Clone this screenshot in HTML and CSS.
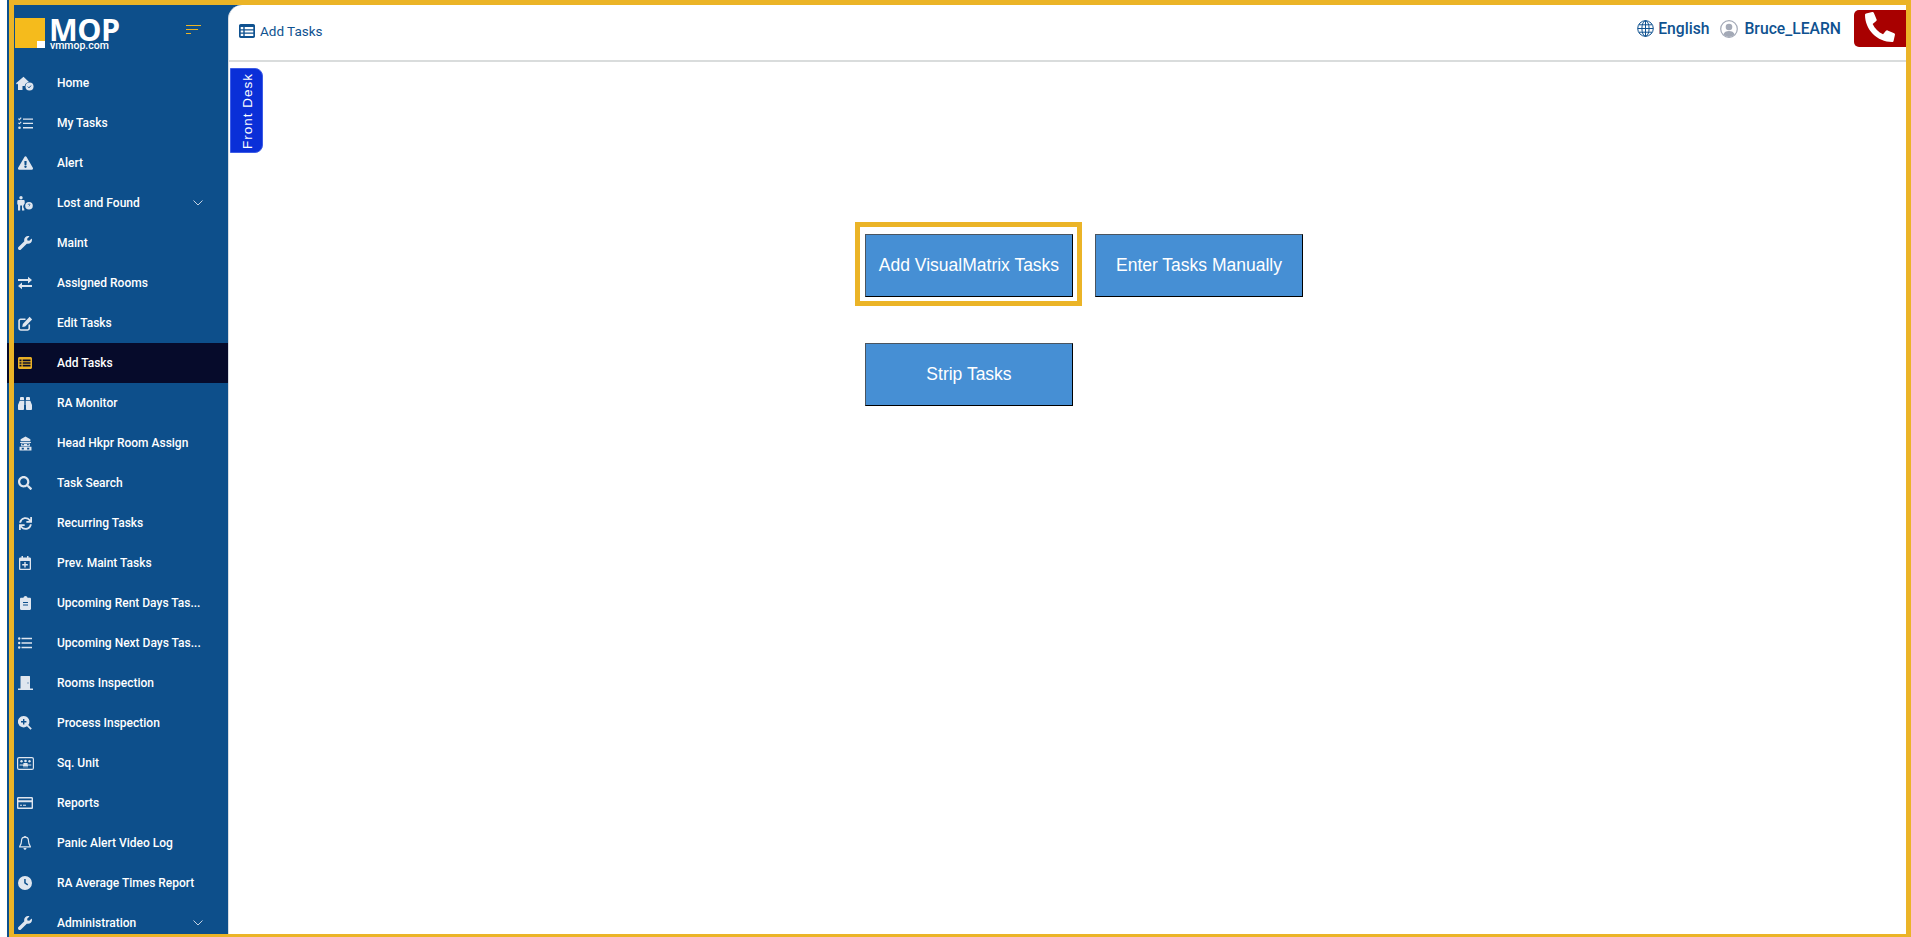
FILE: index.html
```html
<!DOCTYPE html>
<html lang="en">
<head>
<meta charset="utf-8">
<title>Add Tasks</title>
<link rel="stylesheet" href="styles.css">
</head>
<body>
<div class="frame"></div>
<div class="shell">
  <aside class="sidebar">
    <div class="brand">
      <div class="logo-mark"><span class="logo-notch"></span></div>
      <div class="logo-text"><div class="logo-mop">MOP</div><div class="logo-url">vmmop.com</div></div>
      <div class="burger"><span class="b1"></span><span class="b2"></span><span class="b3"></span></div>
    </div>
    <nav class="nav">
      <a class="item"><span class="ico"><svg width="18" height="15" viewBox="0 0 18 15"><path d="M7.500.8 0 7.200l1 1.200 1-.8V14h4.500v-4h2.200a5 5 0 0 1 4.300-3.900L7.500.8z"/><circle cx="13.500" cy="10.500" r="4"/><path d="m11.800 10.600 1.200 1.200 2-2.200" fill="none" stroke="#0d4f8b" stroke-width="1"/></svg></span><span class="label">Home</span></a>
      <a class="item"><span class="ico"><svg width="15" height="13" viewBox="0 0 15 13"><path d="M5 1.500h10v1.300H5zM5 5.800h10v1.300H5zM5 10.100h10v1.300H5z"/><path d="m.4 1.700 1 1 1.800-2" fill="none" stroke="currentColor" stroke-width="1.100"/><path d="m.4 5.800 1 1 1.800-2" fill="none" stroke="currentColor" stroke-width="1.100"/><circle cx="1.500" cy="10.800" r="1.300"/></svg></span><span class="label">My Tasks</span></a>
      <a class="item"><span class="ico"><svg width="15" height="14" viewBox="0 0 576 512"><path d="M569.517 440.013C587.975 472.007 564.806 512 527.94 512H48.054c-36.937 0-59.999-40.055-41.577-71.987L246.423 23.985c18.467-32.009 64.72-31.951 83.154 0l239.94 416.028zM288 354c-25.405 0-46 20.595-46 46s20.595 46 46 46 46-20.595 46-46-20.595-46-46-46zm-43.673-165.346l7.418 136c.347 6.364 5.609 11.346 11.982 11.346h48.546c6.373 0 11.635-4.982 11.982-11.346l7.418-136c.375-6.874-5.098-12.654-11.982-12.654h-63.383c-6.884 0-12.356 5.780-11.981 12.654z"/></svg></span><span class="label">Alert</span></a>
      <a class="item"><span class="ico"><svg width="16" height="15" viewBox="0 0 16 15"><circle cx="4" cy="1.700" r="1.700"/><path d="M1.200 4h5.600c.5 0 .9.400.9.900v2.600A4.500 4.500 0 0 0 7.300 13.300V14.500H5V9.500H3.200v5H1V8.500H.3V4.900c0-.5.400-.9.900-.9z"/><circle cx="12" cy="9.700" r="3.800"/><path d="M11.100 8.700c.2-.9 1.900-.9 1.900.1 0 .7-1 .7-1 1.500" fill="none" stroke="#0d4f8b" stroke-width=".8"/></svg></span><span class="label">Lost and Found</span><svg class="chev" width="10" height="6" viewBox="0 0 10 6"><path d="m.5.500 4.500 4.500 4.500-4.500" fill="none" stroke="currentColor"/></svg></a>
      <a class="item"><span class="ico"><svg width="14" height="14" viewBox="0 0 512 512"><path d="M507.73 109.1c-2.24-9.03-13.54-12.09-20.12-5.510l-74.360 74.360-67.880-11.310-11.310-67.880 74.360-74.360c6.620-6.620 3.430-17.900-5.660-20.160-47.380-11.740-99.550.910-136.580 37.930-39.640 39.640-50.550 97.100-34.050 147.200L18.740 402.760c-24.990 24.990-24.990 65.510 0 90.500 24.990 24.990 65.510 24.990 90.500 0l213.210-213.210c50.120 16.710 107.470 5.680 147.370-34.220 37.070-37.070 49.700-89.320 37.910-136.730z"/></svg></span><span class="label">Maint</span></a>
      <a class="item"><span class="ico"><svg width="14" height="14" viewBox="0 0 14 13"><path d="M0 2.600h10V.2l4 3.400-4 3.400V4.600H0zM14 8.400H4V6L0 9.400l4 3.400v-2.400h10z"/></svg></span><span class="label">Assigned Rooms</span></a>
      <a class="item"><span class="ico"><svg width="15" height="15" viewBox="0 0 14 14"><path d="M10.500 8v3.500c0 .8-.7 1.500-1.500 1.500H2.500C1.700 13 1 12.300 1 11.500V4.500C1 3.700 1.700 3 2.500 3H7" fill="none" stroke="currentColor" stroke-width="1.500"/><path d="M4.500 7.500 10.800.8l2.400 2.400-6.500 6.600-2.700.4z"/></svg></span><span class="label">Edit Tasks</span></a>
      <a class="item active"><span class="ico"><svg width="14" height="12" viewBox="0 0 14 12"><path fill-rule="evenodd" d="M1.500 0h11c.8 0 1.500.7 1.500 1.500v9c0 .8-.7 1.500-1.500 1.500h-11C.7 12 0 11.300 0 10.500v-9C0 .7.700 0 1.500 0zM1.500 2.500v1.700h2V2.500zm3.200 0v1.700h7.800V2.500zM1.500 5.200v1.600h2V5.200zm3.200 0v1.600h7.800V5.200zM1.500 7.800v1.700h2V7.800zm3.200 0v1.700h7.800V7.800z"/></svg></span><span class="label">Add Tasks</span></a>
      <a class="item"><span class="ico"><svg width="14" height="13" viewBox="0 0 14 13"><path d="M2 3V1.200C2 .5 2.500 0 3.200 0h1.600C5.500 0 6 .5 6 1.200V3zM8 3V1.200C8 .5 8.500 0 9.200 0h1.600c.7 0 1.200.5 1.200 1.200V3zM1.700 3.800H6V12c0 .5-.4 1-1 1H1c-.6 0-1-.5-1-1V8zM8 3.800h4.300L14 8v4c0 .5-.4 1-1 1H9c-.6 0-1-.5-1-1zM6.700 3.800h.6V8h-.6z"/></svg></span><span class="label">RA Monitor</span></a>
      <a class="item"><span class="ico"><svg width="13" height="15" viewBox="0 0 12 13"><path fill-rule="evenodd" d="M6 0 1.500 2.500v2h9v-2zM1 5h10v1H1zM2 6.500h8V9H2zM.5 9.500h11V13H.5zM3 7v1h1.500V7zM7.500 7v1H9V7zM2.500 10.500v1.500h2v-1.500zM7.500 10.500v1.500h2v-1.500z"/></svg></span><span class="label">Head Hkpr Room Assign</span></a>
      <a class="item"><span class="ico"><svg width="14" height="14" viewBox="0 0 512 512"><path d="M505 442.700L405.300 343c-4.500-4.500-10.600-7-17-7H372c27.600-35.300 44-79.700 44-128C416 93.100 322.900 0 208 0S0 93.100 0 208s93.100 208 208 208c48.300 0 92.700-16.400 128-44v16.300c0 6.400 2.500 12.500 7 17l99.700 99.700c9.400 9.400 24.600 9.400 33.900 0l28.300-28.300c9.400-9.400 9.400-24.600.1-34zM208 336c-70.700 0-128-57.200-128-128 0-70.700 57.200-128 128-128 70.700 0 128 57.200 128 128 0 70.700-57.200 128-128 128z"/></svg></span><span class="label">Task Search</span></a>
      <a class="item"><span class="ico"><svg width="13" height="13" viewBox="0 0 512 512"><path d="M440.650 12.570l4 82.770A247.160 247.160 0 0 0 255.830 8C134.730 8 33.910 94.920 12.290 209.820A12 12 0 0 0 24.090 224h49.050a12 12 0 0 0 11.670-9.260 175.910 175.910 0 0 1 317-56.940l-101.460-4.860a12 12 0 0 0-12.570 12v47.410a12 12 0 0 0 12 12H500a12 12 0 0 0 12-12V12a12 12 0 0 0-12-12h-47.370a12 12 0 0 0-11.980 12.570zM255.830 432a175.610 175.610 0 0 1-146-77.800l101.800 4.870a12 12 0 0 0 12.570-12v-47.400a12 12 0 0 0-12-12H12a12 12 0 0 0-12 12V500a12 12 0 0 0 12 12h47.350a12 12 0 0 0 12-12.600l-4.150-82.570A247.170 247.170 0 0 0 255.830 504c121.110 0 221.930-86.920 243.550-201.820a12 12 0 0 0-11.800-14.180h-49.050a12 12 0 0 0-11.670 9.260A175.860 175.860 0 0 1 255.830 432z"/></svg></span><span class="label">Recurring Tasks</span></a>
      <a class="item"><span class="ico"><svg width="12" height="14" viewBox="0 0 12 14"><path fill-rule="evenodd" d="M2.500 0h1.500v1.500h4V0h1.500v1.500h1.200c.7 0 1.300.6 1.300 1.300v9.900c0 .7-.6 1.300-1.300 1.300H1.300C.6 14 0 13.400 0 12.700V2.800c0-.7.600-1.300 1.300-1.300h1.200zM1.300 5v7.700h9.400V5zM5.300 6h1.400v2.100h2.100v1.400H6.700v2.100H5.300V9.500H3.200V8.100h2.100z"/></svg></span><span class="label">Prev. Maint Tasks</span></a>
      <a class="item"><span class="ico"><svg width="11" height="14" viewBox="0 0 11 14"><path fill-rule="evenodd" d="M1.200 1.800h2.300C3.600.8 4.500 0 5.500 0s1.900.8 2 1.800h2.300c.7 0 1.200.5 1.200 1.200v9.800c0 .7-.5 1.200-1.200 1.200H1.200C.5 14 0 13.500 0 12.800V3C0 2.300.5 1.800 1.200 1.800zM3 6v.9h5V6zM3 8.500v.9h5v-.9z"/></svg></span><span class="label">Upcoming Rent Days Tas...</span></a>
      <a class="item"><span class="ico"><svg width="14" height="12" viewBox="0 0 14 12"><circle cx="1.200" cy="1.500" r="1.200"/><circle cx="1.200" cy="6" r="1.200"/><circle cx="1.200" cy="10.500" r="1.200"/><path d="M3.500.8H14v1.400H3.500zM3.500 5.300H14v1.400H3.500zM3.500 9.800H14v1.400H3.500z"/></svg></span><span class="label">Upcoming Next Days Tas...</span></a>
      <a class="item"><span class="ico"><svg width="15" height="14" viewBox="0 0 15 14"><path fill-rule="evenodd" d="M3 0h8.500c.3 0 .5.200.5.500V12.500h3V14H0v-1.500h2.500V.5c0-.3.200-.5.500-.5zM9.500 6.500v1h1v-1z"/></svg></span><span class="label">Rooms Inspection</span></a>
      <a class="item"><span class="ico"><svg width="14" height="14" viewBox="0 0 14 14"><path fill-rule="evenodd" d="M5.700 0a5.700 5.700 0 0 1 4.600 9l3.500 3.500-1.300 1.300-3.500-3.500A5.700 5.700 0 1 1 5.700 0zM5 3v2H3v1.400h2v2h1.400v-2h2V5h-2V3z"/></svg></span><span class="label">Process Inspection</span></a>
      <a class="item"><span class="ico"><svg width="17" height="13" viewBox="0 0 17 13"><rect x=".6" y=".6" width="15.800" height="11.800" rx="1.500" fill="none" stroke="currentColor" stroke-width="1.200"/><circle cx="4.500" cy="4.300" r="1.200"/><circle cx="8.500" cy="4" r="1.300"/><circle cx="12.500" cy="4.300" r="1.200"/><path d="M2.700 7.500h3.200l.4 1h-3.800zM6.500 6h4l.6 3H5.900zM11 7.500h3.300v1h-3.100zM6 9.500h5v.8H6z"/></svg></span><span class="label">Sq. Unit</span></a>
      <a class="item"><span class="ico"><svg width="16" height="12" viewBox="0 0 16 12"><path fill-rule="evenodd" d="M1.300 0h13.400c.7 0 1.300.6 1.300 1.300v9.400c0 .7-.6 1.300-1.300 1.300H1.300C.6 12 0 11.400 0 10.700V1.300C0 .6.600 0 1.300 0zM1.400 1.400v1.800h13.200V1.400zM1.400 5.300v5.300h13.200V5.300zM3 7.800h2v1H3zM6 7.800h3v1H6z"/></svg></span><span class="label">Reports</span></a>
      <a class="item"><span class="ico"><svg width="12" height="14" viewBox="0 0 12 14"><path d="M6 1.200c-2.200 0-3.500 1.800-3.500 3.800 0 3-1.100 4.300-1.800 5.300v.5h10.600v-.5c-.7-1-1.800-2.300-1.800-5.300 0-2-1.300-3.800-3.500-3.800z" fill="none" stroke="currentColor" stroke-width="1.200"/><path d="M4.500 12h3c0 1-.7 1.800-1.500 1.800S4.500 13 4.500 12zM5.200 0h1.600v1.500H5.200z"/></svg></span><span class="label">Panic Alert Video Log</span></a>
      <a class="item"><span class="ico"><svg width="14" height="14" viewBox="0 0 14 14"><path fill-rule="evenodd" d="M7 0a7 7 0 1 1 0 14A7 7 0 0 1 7 0zM6.200 3v4.300l3.200 2.100.8-1.200-2.500-1.600V3z"/></svg></span><span class="label">RA Average Times Report</span></a>
      <a class="item"><span class="ico"><svg width="14" height="14" viewBox="0 0 512 512"><path d="M507.730 109.100c-2.240-9.030-13.540-12.090-20.120-5.510l-74.360 74.360-67.880-11.310-11.310-67.880 74.360-74.360c6.620-6.620 3.430-17.900-5.660-20.160-47.380-11.740-99.550.91-136.580 37.930-39.640 39.640-50.550 97.100-34.050 147.200L18.740 402.760c-24.990 24.990-24.990 65.510 0 90.500 24.990 24.990 65.510 24.990 90.500 0l213.210-213.210c50.120 16.710 107.470 5.680 147.370-34.220 37.070-37.070 49.700-89.320 37.910-136.730z"/></svg></span><span class="label">Administration</span><svg class="chev" width="10" height="6" viewBox="0 0 10 6"><path d="m.5.500 4.500 4.500 4.500-4.500" fill="none" stroke="currentColor"/></svg></a>
    </nav>
  </aside>
  <main class="main">
    <header class="topbar">
      <div class="crumb">
        <svg class="crumb-icon" width="16" height="14" viewBox="0 0 16 14"><path fill-rule="evenodd" d="M1.700 0h12.600c.9 0 1.700.8 1.700 1.700v10.600c0 .9-.8 1.700-1.700 1.700H1.700C.8 14 0 13.200 0 12.300V1.700C0 .8.800 0 1.700 0zM1.700 3v2.200h2.600V3zm4 0v2.200h8.600V3zM1.700 6.400v2.200h2.600V6.400zm4 0v2.200h8.600V6.400zM1.700 9.800V12h2.600V9.800zm4 0V12h8.600V9.800z"/></svg>
        <span>Add Tasks</span>
      </div>
      <div class="tools">
        <svg class="globe" width="17" height="17" viewBox="0 0 17 17"><g fill="none" stroke="currentColor" stroke-width="1"><circle cx="8.500" cy="8.500" r="7.800"/><ellipse cx="8.500" cy="8.500" rx="3.600" ry="7.800"/><path d="M8.500.7v15.600M.7 8.500h15.600M1.800 4.800h13.400M1.800 12.200h13.400"/></g></svg>
        <span class="tool-text">English</span>
        <svg class="avatar" width="18" height="18" viewBox="0 0 18 18"><circle cx="9" cy="9" r="8.300" fill="#fff" stroke="#a3a9b6" stroke-width="1.200"/><circle cx="9" cy="7" r="3.300" fill="#a3a9b6"/><path d="M3.300 14.500c.8-2.600 3-3.600 5.700-3.600s4.900 1 5.700 3.600A8 8 0 0 1 9 17a8 8 0 0 1-5.700-2.500z" fill="#a3a9b6"/></svg>
        <span class="tool-text">Bruce_LEARN</span>
        <div class="call"><svg class="call-icon" width="30" height="30" viewBox="0 0 512 512"><path transform="matrix(-1 0 0 1 512 0)" d="M493.400 24.600l-104-24c-11.300-2.600-22.900 3.300-27.500 13.900l-48 112c-4.200 9.800-1.400 21.300 6.900 28l60.600 49.600c-36 76.700-98.900 140.500-177.200 177.200l-49.600-60.600c-6.800-8.300-18.200-11.100-28-6.900l-112 48C3.900 366.500-2 378.100.6 389.400l24 104C27.100 504.200 36.700 512 48 512c256.100 0 464-207.500 464-464 0-11.200-7.700-20.900-18.600-23.400z"/></svg></div>
      </div>
    </header>
    <div class="desk-tab">Front Desk</div>
    <section class="actions">
      <button class="action action-focus">Add VisualMatrix Tasks</button>
      <button class="action">Enter Tasks Manually</button>
      <button class="action">Strip Tasks</button>
    </section>
  </main>
</div>
</body>
</html>
```
FILE: styles.css
```css
* { box-sizing: border-box; }
html, body { margin: 0; height: 100%; overflow: hidden; background: #fff; }
body { font-family: Roboto, "Liberation Sans", sans-serif; padding-left: 7px; }

.frame {
  position: fixed;
  left: 9px; top: 0; right: 0; bottom: 0;
  border-style: solid;
  border-color: #ebb427;
  border-width: 5px 5px 3px 5px;
  pointer-events: none;
  z-index: 10;
}

.shell { display: flex; height: 100%; background: #0d4f8b; overflow: hidden; }

.sidebar { width: 221px; flex: none; color: #fff; background: #0d4f8b; }
.brand { height: 63px; display: flex; align-items: flex-start; padding: 18px 27px 0 8px; }
.logo-mark { width: 30px; height: 30px; background: #f5bb1c; display: flex; justify-content: flex-end; align-items: flex-end; flex: none; }
.logo-notch { width: 8px; height: 7px; background: #fff; display: block; }
.logo-text { margin-left: 4px; color: #fff; }
.logo-mop { font-family: "Open Sans", sans-serif; font-weight: 700; font-size: 30.500px; line-height: 22px; height: 22px; letter-spacing: -.5px; }
.logo-url { font-size: 10.500px; font-weight: 500; line-height: 11px; margin: 0 0 0 1px; }
.burger { margin: 7px 0 0 auto; display: flex; flex-direction: column; gap: 3px; }
.burger span { display: block; height: 1px; background: #ebb427; }
.b1 { width: 15px; }
.b2 { width: 12px; }
.b3 { width: 5px; }

.nav { display: flex; flex-direction: column; }
.item { height: 40px; flex: none; display: flex; align-items: center; padding-left: 7px; font-size: 12px; font-weight: 500; color: #fff; }
.ico { width: 22px; height: 16px; margin-right: 21px; display: flex; align-items: center; justify-content: center; color: #dfe6ef; flex: none; }
.ico svg { fill: currentColor; }
.label { width: 142px; white-space: nowrap; flex: none; }
.chev { color: #c6d3e2; margin-left: -6px; flex: none; }
.item.active { background: #060b2b; }
.item.active .ico { color: #e9b026; }

.main { flex: 1; margin-top: 5px; background: #fff; border-top-left-radius: 14px; border-left: 1px solid #d8dce2; position: relative; min-width: 0; }

.topbar { height: 57px; border-bottom: 2px solid #d9dcdc; display: flex; align-items: flex-start; justify-content: space-between; color: #0f5290; }
.crumb { display: flex; align-items: center; gap: 5px; font-size: 13.500px; padding: 18px 0 0 10px; }
.crumb-icon { fill: currentColor; }
.tools { display: flex; align-items: center; padding: 5px 5px 0 0; font-size: 15.700px; font-weight: 500; }
.globe { margin-right: 4px; }
.tool-text { line-height: 37px; }
.avatar { margin: 0 6px 0 11px; }
.call { width: 52px; height: 37px; margin-left: 13px; background: #a80000; border-radius: 5px 0 0 5px; display: flex; align-items: center; justify-content: center; }
.call-icon { fill: #fff; margin-top: -4px; }

.desk-tab {
  position: absolute;
  left: 1px; top: 63px;
  width: 33px; height: 85px;
  background: #0a2fd8;
  border: 1px solid #3d5ce6;
  border-radius: 8px 0 0 8px;
  color: #fff;
  font-family: "Liberation Sans", Arial, sans-serif;
  font-size: 13.500px;
  letter-spacing: 1px;
  writing-mode: vertical-rl;
  transform: rotate(180deg);
  text-align: center;
  line-height: 34px;
}

.actions { display: grid; grid-template-columns: 208px 208px; grid-auto-rows: 63px; column-gap: 22px; row-gap: 46px; margin: 172px 0 0 636px; }
.action {
  background: #468fd4;
  color: #fff;
  font-family: "Liberation Sans", Arial, sans-serif;
  font-size: 17.500px;
  border: 1px solid #000;
  border-top-color: #4a5560;
  border-left-color: #4a5560;
  padding: 0;
  position: relative;
}
.action-focus::after {
  content: "";
  position: absolute;
  top: -13px; left: -11px; right: -10px; bottom: -10px;
  border: 5px solid #ebb427;
}
```
